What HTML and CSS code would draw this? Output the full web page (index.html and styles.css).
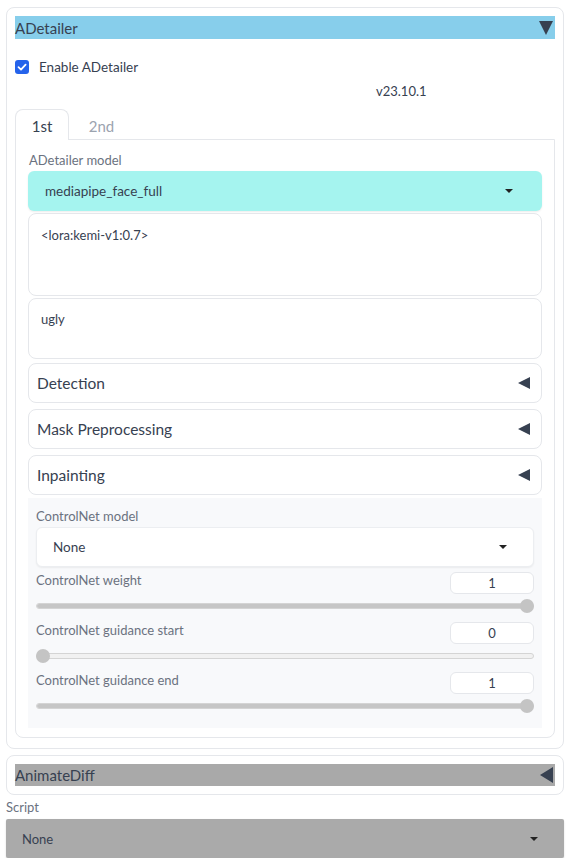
FILE: index.html
```html
<!DOCTYPE html>
<html>
<head>
<meta charset="utf-8">
<link rel="stylesheet" href="styles.css">
</head>
<body>
<div class="block">
  <div class="acc-head sky">
    <span class="head-title">ADetailer</span>
    <span class="tri-down"></span>
  </div>
  <div class="check-row">
    <span class="checkbox"><svg viewBox="0 0 14 14" width="14" height="14"><path d="M3.5 7.2 L6 9.6 L10.6 4.6" fill="none" stroke="#fff" stroke-width="1.8" stroke-linecap="round" stroke-linejoin="round"/></svg></span>
    <span class="check-label">Enable ADetailer</span>
  </div>
  <div class="version">v23.10.1</div>
  <div class="tabs">
    <div class="tab-nav">
      <span class="tab active">1st</span>
      <span class="tab">2nd</span>
    </div>
    <div class="tab-panel">
      <div class="label">ADetailer model</div>
      <div class="dropdown aqua"><span>mediapipe_face_full</span><span class="caret"></span></div>
      <div class="textarea tall">&lt;lora:kemi-v1:0.7&gt;</div>
      <div class="textarea short">ugly</div>
      <div class="accordion"><span>Detection</span><span class="tri-left"></span></div>
      <div class="accordion"><span>Mask Preprocessing</span><span class="tri-left"></span></div>
      <div class="accordion"><span>Inpainting</span><span class="tri-left"></span></div>
      <div class="cn-panel">
        <div class="label">ControlNet model</div>
        <div class="dropdown white"><span>None</span><span class="caret"></span></div>
        <div class="slider-block">
          <div class="slider-head"><span class="label">ControlNet weight</span><span class="num">1</span></div>
          <div class="slider"><div class="track"><div class="fill" style="width:100%"></div></div><span class="thumb end"></span></div>
        </div>
        <div class="slider-block">
          <div class="slider-head"><span class="label">ControlNet guidance start</span><span class="num">0</span></div>
          <div class="slider"><div class="track"><div class="fill" style="width:0%"></div></div><span class="thumb start"></span></div>
        </div>
        <div class="slider-block">
          <div class="slider-head"><span class="label">ControlNet guidance end</span><span class="num">1</span></div>
          <div class="slider"><div class="track"><div class="fill" style="width:100%"></div></div><span class="thumb end"></span></div>
        </div>
      </div>
    </div>
  </div>
</div>
<div class="block small">
  <div class="acc-head gray">
    <span class="head-title">AnimateDiff</span>
    <span class="tri-left big"></span>
  </div>
</div>
<div class="script-label">Script</div>
<div class="dropdown script"><span>None</span><span class="caret"></span></div>
</body>
</html>
```
FILE: styles.css
```css
* { box-sizing: border-box; }
body {
  margin: 0;
  padding: 7px 5px 0 6px;
  background: #fff;
  font-family: "Lato", "Noto Sans", sans-serif;
  color: #374151;
}
.block {
  border: 1px solid #e5e7eb;
  border-radius: 8px;
  padding: 8px 8px 10px 8px;
  background: #fff;
}
.block.small {
  margin-top: 6px;
  padding: 8px 8px 8px 8px;
}
.acc-head {
  height: 23px;
  display: flex;
  align-items: center;
  justify-content: space-between;
  padding-right: 2px;
}
.acc-head.sky { background: #87ceeb; }
.acc-head.gray { background: #a9a9a9; height: 22px; }
.head-title {
  font-size: 15px;
  color: #374151;
}
.tri-down {
  width: 0; height: 0;
  border-left: 7px solid transparent;
  border-right: 7px solid transparent;
  border-top: 14px solid #374151;
}
.tri-left {
  width: 0; height: 0;
  border-top: 6px solid transparent;
  border-bottom: 6px solid transparent;
  border-right: 12px solid #374151;
}
.tri-left.big {
  border-top-width: 8px;
  border-bottom-width: 8px;
  border-right-width: 13px;
}
.check-row {
  display: flex;
  align-items: center;
  margin-top: 21px;
  height: 14px;
}
.checkbox {
  width: 14px; height: 14px;
  border-radius: 3px;
  background: #2563eb;
  display: inline-flex;
}
.check-label {
  margin-left: 10px;
  font-size: 13.5px;
  color: #374151;
}
.version {
  margin-top: 9px;
  margin-left: 361px;
  font-size: 13px;
  line-height: 16px;
  color: #374151;
}
.tabs { margin-top: 10px; }
.tab-nav {
  display: flex;
  height: 30px;
  align-items: stretch;
}
.tab {
  width: 54px;
  display: flex;
  align-items: center;
  justify-content: center;
  font-size: 15px;
  color: #9ca3af;
  border: 1px solid transparent;
  border-bottom: none;
  border-radius: 8px 8px 0 0;
  padding-top: 2px;
}
.tab.active {
  color: #374151;
  border-color: #e5e7eb;
  background: #fff;
  position: relative;
  top: 1px;
  margin-top: -1px;
}
.tab + .tab { margin-left: 10px; width: 45px; }
.tab-panel {
  border: 1px solid #e5e7eb;
  border-radius: 0 0 8px 8px;
  padding: 12px 12px 9px 12px;
}
.label {
  font-size: 13px;
  line-height: 16px;
  color: #6b7280;
}
.tab-panel > .label { margin-left: 1px; }
.dropdown {
  display: flex;
  align-items: center;
  justify-content: space-between;
  height: 40px;
  padding: 0 29px 0 17px;
  font-size: 13.5px;
  color: #374151;
  border-radius: 6px;
}
.dropdown.aqua {
  margin-top: 3px;
  background: #a5f4ef;
  box-shadow: 0 1px 2px rgba(0,0,0,0.08);
}
.dropdown.white {
  margin-top: 3px;
  background: #fff;
  border: 1px solid #eceef1;
  box-shadow: 0 1px 2px rgba(0,0,0,0.06);
  padding: 0 26px 0 16px;
}
.caret {
  width: 0; height: 0;
  border-left: 4px solid transparent;
  border-right: 4px solid transparent;
  border-top: 4px solid #222;
}
.textarea {
  margin-top: 2px;
  border: 1px solid #e5e7eb;
  border-radius: 8px;
  background: #fff;
  padding: 13px 12px;
  font-size: 13px;
  line-height: 16px;
  color: #374151;
}
.textarea.tall { height: 83px; }
.textarea.short { height: 61px; padding-top: 12px; }
.accordion {
  margin-top: 4px;
  height: 40px;
  border: 1px solid #e5e7eb;
  border-radius: 8px;
  background: #fff;
  display: flex;
  align-items: center;
  justify-content: space-between;
  padding: 0 11px 0 8px;
  font-size: 15.5px;
  color: #374151;
}
.accordion + .accordion { margin-top: 6px; }
.cn-panel {
  margin-top: 3px;
  background: #f8f9fb;
  padding: 10px 8px 10px 8px;
}
.slider-block { margin-top: 5px; }
.slider-block + .slider-block { margin-top: 4px; }
.slider-head {
  height: 22px;
  display: flex;
  justify-content: space-between;
  align-items: flex-start;
}
.num {
  width: 84px;
  height: 22px;
  border: 1px solid #e5e7eb;
  border-radius: 6px;
  background: #fff;
  font-size: 13px;
  display: flex;
  align-items: center;
  justify-content: center;
  color: #374151;
}
.slider {
  position: relative;
  height: 24px;
  display: flex;
  align-items: center;
}
.track {
  width: 100%;
  height: 6px;
  border-radius: 3px;
  background: #f1f1f1;
  border: 1px solid #d4d4d4;
  overflow: hidden;
}
.fill {
  height: 100%;
  background: #c6c6c6;
}
.thumb {
  position: absolute;
  top: 5px;
  width: 14px;
  height: 14px;
  border-radius: 50%;
  background: #c4c4c4;
}
.thumb.start { left: 0; }
.thumb.end { right: 0; }
.script-label {
  margin-top: 4px;
  font-size: 13px;
  line-height: 16px;
  color: #6b7280;
}
.dropdown.script {
  margin-top: 4px;
  height: 39px;
  background: #aaaaaa;
  border-radius: 2px;
  box-shadow: 0 1px 2px rgba(0,0,0,0.15);
  padding: 0 26px 0 16px;
  font-size: 13px;
}
```
